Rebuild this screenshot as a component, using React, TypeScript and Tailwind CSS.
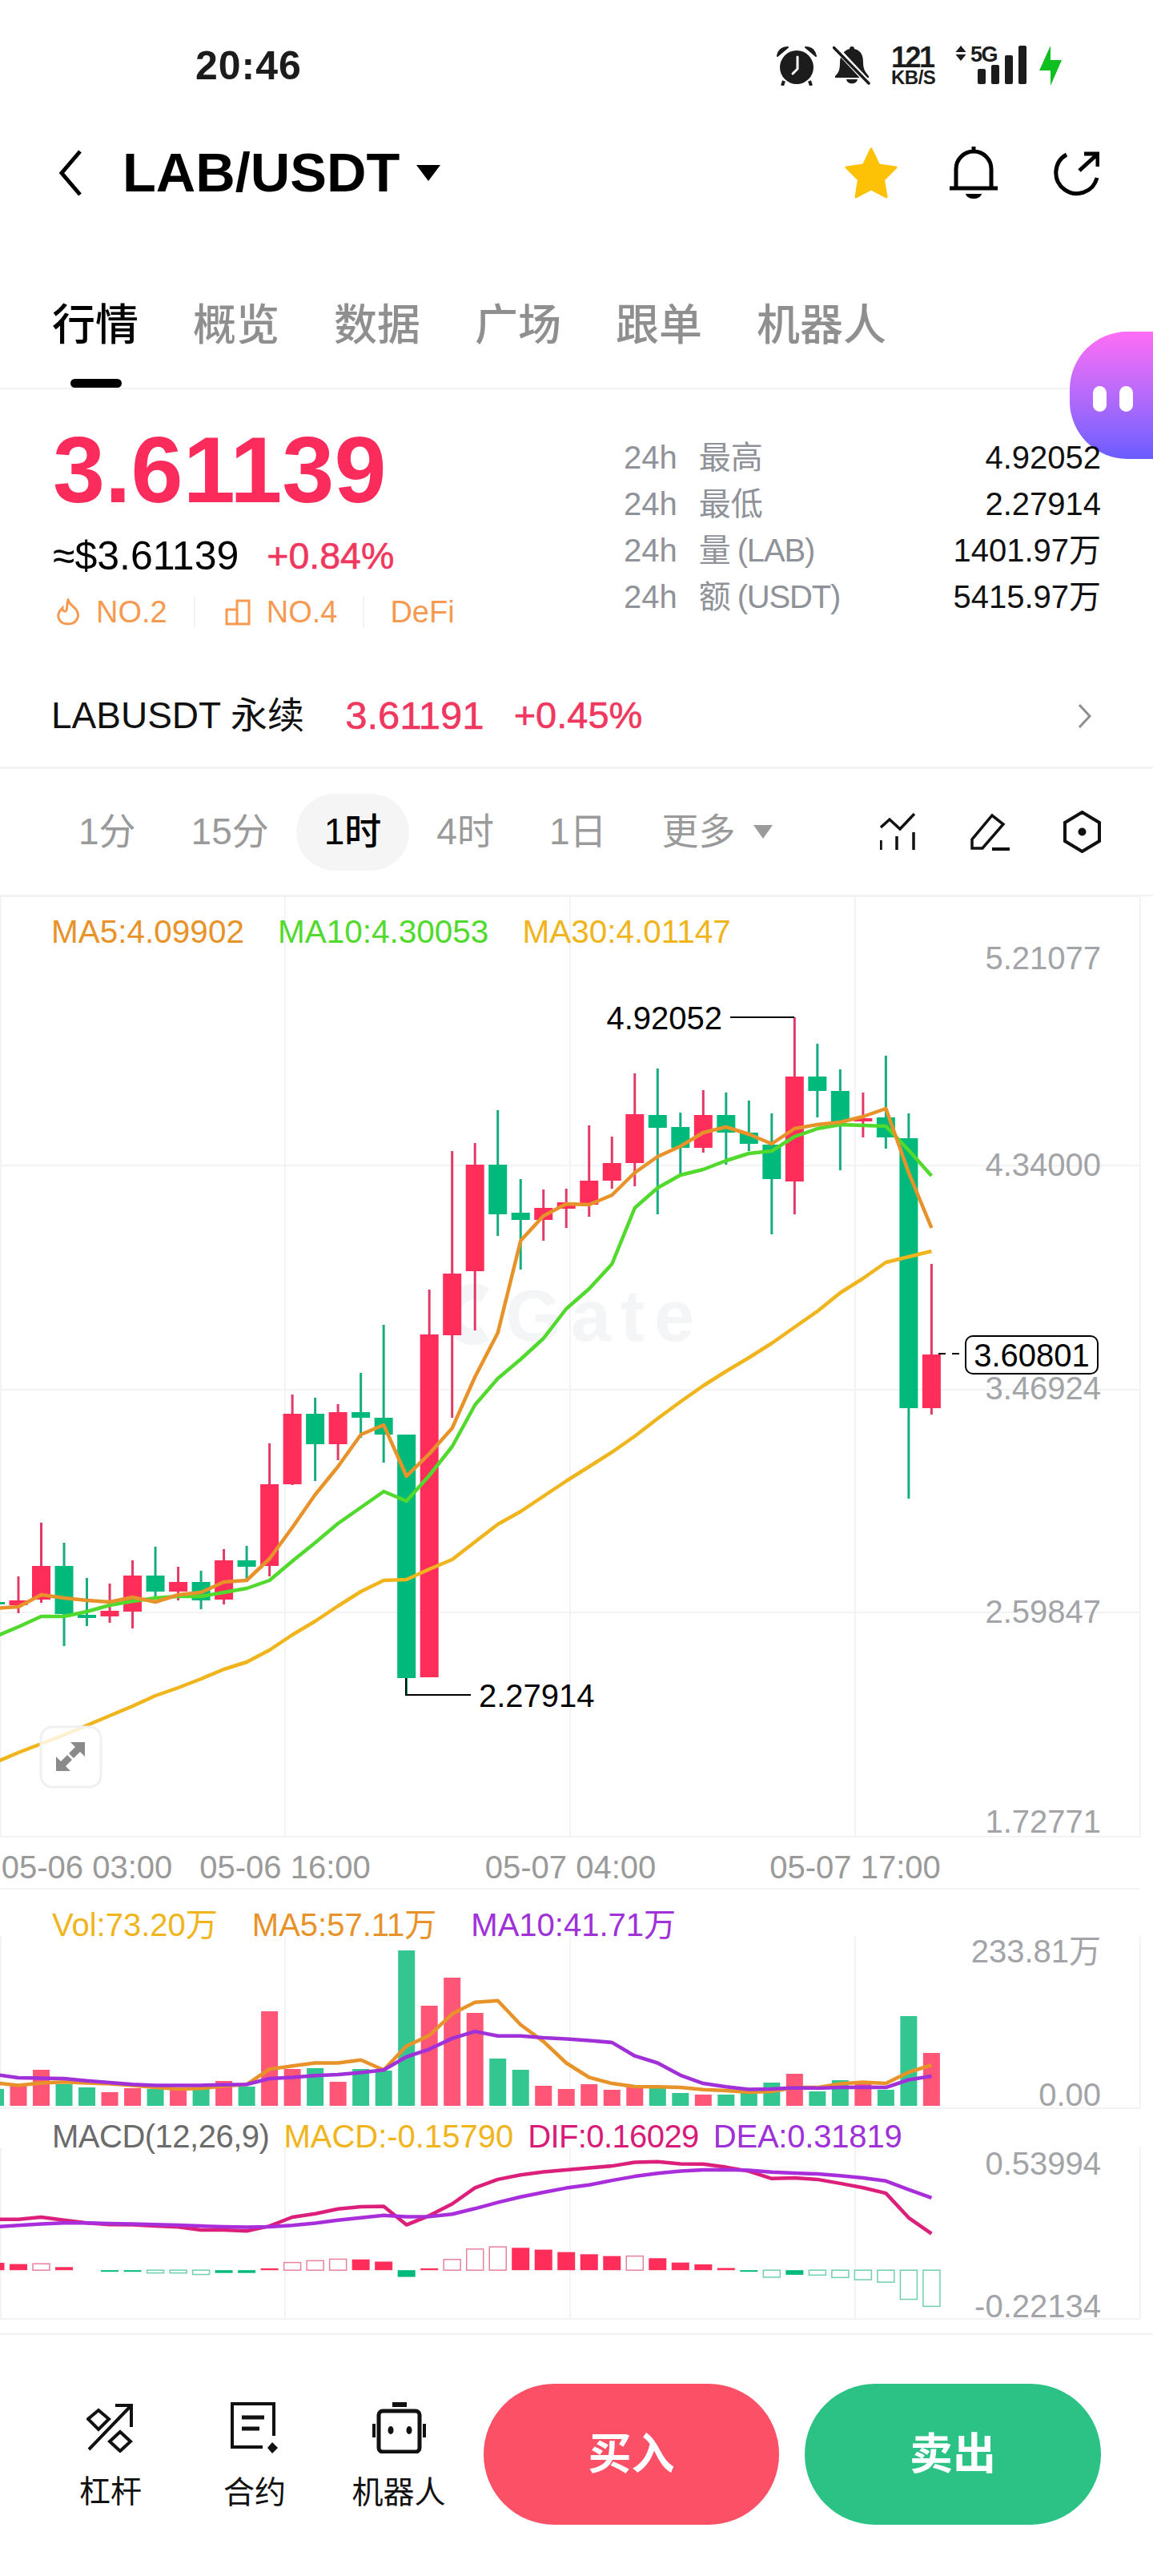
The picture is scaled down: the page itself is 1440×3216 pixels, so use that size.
import React from "react";

const RED = "#ff2d5a";
const GREEN = "#00b97a";
const GRID = "#f3f3f3";

const candleX = (i: number) => 23 + 28.51 * i;

// wick top, body top, body bottom, wick bottom, rising
type Candle = [number, number, number, number, boolean];
const candles: Candle[] = [
  [1967, 1997, 2003, 2013, true],
  [1900, 1954, 1996, 2000, true],
  [1925, 1954, 2014, 2054, false],
  [1969, 2015, 2019, 2029, false],
  [1976, 2010, 2017, 2025, true],
  [1947, 1966, 2011, 2032, true],
  [1930, 1966, 1986, 1993, false],
  [1955, 1974, 1986, 1997, true],
  [1960, 1974, 1997, 2008, false],
  [1933, 1947, 1996, 2002, true],
  [1929, 1947, 1955, 1973, false],
  [1801, 1852, 1954, 1967, true],
  [1740, 1764, 1852, 1853, true],
  [1744, 1764, 1802, 1848, false],
  [1752, 1762, 1802, 1822, true],
  [1713, 1762, 1769, 1794, false],
  [1653, 1769, 1790, 1825, false],
  [1790, 1790, 2094, 2115, false],
  [1609, 1665, 2093, 2093, true],
  [1436, 1589, 1666, 1769, true],
  [1426, 1453, 1586, 1660, true],
  [1385, 1453, 1515, 1542, false],
  [1471, 1513, 1522, 1584, false],
  [1484, 1507, 1522, 1548, true],
  [1483, 1500, 1508, 1532, true],
  [1404, 1473, 1503, 1518, true],
  [1418, 1451, 1473, 1483, true],
  [1339, 1390, 1451, 1480, true],
  [1333, 1391, 1407, 1515, false],
  [1388, 1406, 1432, 1465, false],
  [1360, 1391, 1432, 1438, true],
  [1363, 1391, 1413, 1453, false],
  [1373, 1413, 1427, 1436, false],
  [1389, 1428, 1471, 1540, false],
  [1269, 1343, 1474, 1515, true],
  [1302, 1343, 1361, 1394, false],
  [1334, 1361, 1399, 1460, false],
  [1363, 1395, 1399, 1419, true],
  [1317, 1394, 1419, 1433, false],
  [1389, 1420, 1757, 1870, false],
  [1577, 1690, 1757, 1765, true],
];

// moving averages start one candle left of the visible edge
const ma5 = [2007, 2005, 1990, 1994, 1997, 1999, 1993, 1999, 1990, 1987, 1974, 1972, 1945, 1906, 1865, 1830, 1790, 1778, 1842, 1814, 1782, 1718, 1663, 1548, 1517, 1502, 1503, 1491, 1463, 1443, 1430, 1413, 1406, 1415, 1427, 1408, 1403, 1400, 1393, 1383, 1463, 1532];
const ma10 = [2042, 2030, 2017, 2017, 2011, 2003, 1998, 1994, 1992, 1992, 1987, 1982, 1972, 1948, 1925, 1901, 1881, 1861, 1873, 1841, 1805, 1753, 1720, 1696, 1670, 1633, 1608, 1577, 1507, 1482, 1466, 1459, 1448, 1439, 1436, 1418, 1408, 1403, 1404, 1405, 1435, 1467];
const ma30 = [2199, 2187, 2176, 2165, 2153, 2141, 2129, 2116, 2106, 2095, 2083, 2074, 2059, 2040, 2023, 2004, 1986, 1972, 1971, 1958, 1946, 1924, 1902, 1886, 1867, 1848, 1830, 1812, 1792, 1770, 1749, 1729, 1711, 1694, 1676, 1656, 1636, 1613, 1595, 1575, 1568, 1561];

const volHeights = [21, 25, 45, 27, 23, 17, 22, 21, 21, 21, 31, 24, 118, 46, 47, 30, 46, 44, 194, 125, 160, 116, 59, 45, 25, 21, 27, 20, 24, 22, 16, 14, 14, 16, 29, 40, 18, 32, 27, 20, 112, 66];
const volUp = [false, true, true, false, false, true, true, false, true, false, true, false, true, true, false, true, false, false, false, true, true, true, false, false, true, true, true, true, true, false, false, true, false, false, false, true, false, false, true, false, false, true];

// lower panes were traced at 2.613x, so values go through toY
const toY = (z: number) => 2320 + z / 2.613;
const volMa5 = [730, 738, 730, 727, 730, 733, 738, 745, 750, 748, 740, 735, 685, 675, 665, 665, 655, 688, 610, 575, 505, 467, 462, 540, 595, 665, 712, 732, 742, 743, 745, 752, 755, 760, 758, 745, 745, 733, 728, 732, 695, 672].map(toY);
const volMa10 = [703, 713, 715, 716, 723, 729, 735, 738, 738, 738, 736, 735, 716, 712, 706, 703, 696, 688, 645, 620, 585, 562, 577, 577, 583, 587, 592, 598, 642, 665, 705, 732, 743, 751, 750, 746, 747, 745, 744, 745, 720, 708].map(toY);
const dif = [1175, 1175, 1168, 1178, 1187, 1192, 1193, 1197, 1200, 1210, 1210, 1213, 1197, 1168, 1157, 1141, 1134, 1133, 1193, 1163, 1125, 1072, 1045, 1030, 1020, 1014, 1007, 1001, 989, 987, 994, 995, 1005, 1018, 1042, 1040, 1045, 1058, 1072, 1090, 1170, 1222].map(toY);
const dea = [1200, 1195, 1190, 1187, 1187, 1189, 1190, 1192, 1194, 1197, 1199, 1201, 1199, 1195, 1188, 1178, 1170, 1162, 1167, 1166, 1158, 1140, 1120, 1102, 1087, 1073, 1063, 1048, 1035, 1025, 1018, 1014, 1013, 1015, 1021, 1024, 1027, 1033, 1040, 1050, 1078, 1105].map(toY);

// histogram end, hollow bar
const hist: [number, boolean][] = [
  [1317, false], [1321, false], [1320, true], [1331, false], [1341, false], [1346, false], [1345, false], [1350, true], [1350, true], [1355, true], [1350, false], [1350, false], [1335, false], [1316, true], [1310, true], [1305, true], [1306, false], [1313, false], [1363, false], [1335, false], [1306, true], [1272, true], [1265, true], [1268, false], [1274, false], [1282, false], [1289, false], [1295, false], [1295, true], [1302, false], [1316, false], [1322, false], [1334, false], [1345, false], [1364, true], [1356, false], [1357, true], [1365, true], [1372, true], [1380, true], [1436, true], [1459, true],
];

const pts = (ys: number[]) => ys.map((y, i) => `${candleX(i - 1).toFixed(1)},${y.toFixed(1)}`).join(" ");

function Line({ ys, color, width = 4.5 }: { ys: number[]; color: string; width?: number }) {
  return <polyline points={pts(ys)} fill="none" stroke={color} strokeWidth={width} strokeLinejoin="round" />;
}

function VGrid({ y1, y2 }: { y1: number; y2: number }) {
  return (
    <>
      {[1, 356, 712, 1068, 1424].map((x) => (
        <line key={x} x1={x} x2={x} y1={y1} y2={y2} stroke={GRID} strokeWidth={2} />
      ))}
    </>
  );
}

function AxisLabel({ y, children }: { y: number; children: React.ReactNode }) {
  return (
    <text x={1375} y={y + 14} textAnchor="end" fontSize={40} fill="#a2a4a8">
      {children}
    </text>
  );
}

function MainChart() {
  return (
    <div className="relative h-[1240px]">
      <svg width="1440" height="1240" viewBox="0 1118 1440 1240" className="block">
        <VGrid y1={1118} y2={2292} />
        {[1118, 1454, 1734, 2012, 2292].map((y) => (
          <line key={y} x1={0} x2={1424} y1={y} y2={y} stroke={GRID} strokeWidth={2} />
        ))}
        <path d="M606 1616 A28 28 0 1 0 606 1664" fill="none" stroke="#f4f5f6" strokeWidth={20} />
        <text x={631} y={1673} fontSize={90} fontWeight={700} letterSpacing={12} fill="#f4f5f6">
          Gate
        </text>
        <AxisLabel y={1195}>5.21077</AxisLabel>
        <AxisLabel y={1453}>4.34000</AxisLabel>
        <AxisLabel y={1732}>3.46924</AxisLabel>
        <AxisLabel y={2011}>2.59847</AxisLabel>
        <AxisLabel y={2273}>1.72771</AxisLabel>
        {candles.map(([wt, bt, bb, wb, up], i) => (
          <g key={i}>
            <line x1={candleX(i)} x2={candleX(i)} y1={wt} y2={wb} stroke={up ? "#e23a66" : "#16ab80"} strokeWidth={3} />
            <rect x={candleX(i) - 11.5} y={bt} width={23} height={bb - bt} fill={up ? RED : GREEN} />
          </g>
        ))}
        <rect x={0} y={1999} width={6} height={3} fill={GREEN} />
        <Line ys={ma30} color="#f0b41c" />
        <Line ys={ma10} color="#52d92e" />
        <Line ys={ma5} color="#e8922a" />
        <text x={902} y={1284} textAnchor="end" fontSize={40} fill="#000">
          4.92052
        </text>
        <path d="M912 1269 H992" stroke="#000" strokeWidth={2} fill="none" />
        <path d="M507 2094 V2115 H588" stroke="#000" strokeWidth={2} fill="none" />
        <text x={598} y={2130} fontSize={40} fill="#000">
          2.27914
        </text>
        <path d="M1172 1689 H1205" stroke="#000" strokeWidth={2} strokeDasharray="9 8" />
        <rect x={1206} y={1667} width={165} height={47} rx={9} fill="#fff" stroke="#000" strokeWidth={2} />
        <text x={1288.5} y={1705} textAnchor="middle" fontSize={40} fill="#000">
          3.60801
        </text>
        <rect x={51} y={2155} width={75} height={75} rx={14} fill="#ffffff" fillOpacity={0.8} stroke="#f0f0f0" strokeWidth={3} />
        <path d="M70 2210 V2192 L76 2198 L84 2190 L90 2196 L82 2204 L88 2210 Z M106 2174 V2192 L100 2186 L92 2194 L86 2188 L94 2180 L88 2174 Z" fill="#8a8a8a" />
        {[
          ["05-06 03:00", 108.5],
          ["05-06 16:00", 356],
          ["05-07 04:00", 712.5],
          ["05-07 17:00", 1068],
        ].map(([label, x]) => (
          <text key={label} x={x} y={2344} textAnchor="middle" fontSize={40} fill="#9a9a9a">
            {label}
          </text>
        ))}
        <line x1={0} x2={1424} y1={2358} y2={2358} stroke="#f0f0f0" strokeWidth={3} />
      </svg>
      <div className="absolute left-[64px] top-[21px] flex gap-[42px] text-[40.5px] leading-[46px]">
        <span className="text-[#e8922a]">MA5:4.09902</span>
        <span className="text-[#52d92e]">MA10:4.30053</span>
        <span className="text-[#f0b41c]">MA30:4.01147</span>
      </div>
    </div>
  );
}

function VolumeChart() {
  return (
    <div className="relative h-[280px]">
      <svg width="1440" height="280" viewBox="0 2358 1440 280" className="block">
        <VGrid y1={2416} y2={2631} />
        <line x1={0} x2={1424} y1={2631} y2={2631} stroke={GRID} strokeWidth={2} />
        <AxisLabel y={2435}>233.81万</AxisLabel>
        <AxisLabel y={2614}>0.00</AxisLabel>
        {volHeights.map((h, i) => (
          <rect key={i} x={candleX(i - 1) - 10.5} y={2628 - h} width={21} height={h} fill={volUp[i] ? "#ff5577" : "#34c691"} />
        ))}
        <Line ys={volMa5} color="#e8922a" />
        <Line ys={volMa10} color="#a030d8" />
      </svg>
      <div className="absolute left-[65px] top-[21px] flex gap-[43px] text-[40px] leading-[46px]">
        <span className="text-[#f0b41c]">Vol:73.20万</span>
        <span className="text-[#e8922a]">MA5:57.11万</span>
        <span className="text-[#a030d8]">MA10:41.71万</span>
      </div>
    </div>
  );
}

function MacdChart() {
  const zero = toY(1341);
  return (
    <div className="relative h-[276px]">
      <svg width="1440" height="276" viewBox="0 2638 1440 276" className="block">
        <VGrid y1={2680} y2={2894} />
        <line x1={0} x2={1424} y1={2894} y2={2894} stroke={GRID} strokeWidth={2} />
        <line x1={0} x2={1440} y1={2913} y2={2913} stroke="#f3f3f3" strokeWidth={3} />
        <AxisLabel y={2700}>0.53994</AxisLabel>
        <AxisLabel y={2878}>-0.22134</AxisLabel>
        {hist.map(([end, hollow], i) => {
          const y = toY(end);
          const top = Math.min(y, zero);
          const h = Math.abs(y - zero);
          if (h < 1) return null;
          const color = y < zero ? RED : GREEN;
          return hollow ? (
            <rect key={i} x={candleX(i - 1) - 10.5} y={top} width={21} height={h} fill="#fff" stroke={y < zero ? "#e8829c" : "#6fcfb0"} strokeWidth={1.5} />
          ) : (
            <rect key={i} x={candleX(i - 1) - 11} y={top} width={22} height={Math.max(h, 2)} fill={color} />
          );
        })}
        <Line ys={dif} color="#dc1f7a" />
        <Line ys={dea} color="#a92edb" />
      </svg>
      <div className="absolute left-[65px] top-[5px] flex gap-[18px] text-[40px] leading-[46px]">
        <span className="tracking-[-0.5px] text-[#6b6b6b]">MACD(12,26,9)</span>
        <span className="text-[#f0b41c]">MACD:-0.15790</span>
        <span className="tracking-[-0.6px] text-[#d81b78]">DIF:0.16029</span>
        <span className="tracking-[-0.2px] text-[#a030d8]">DEA:0.31819</span>
      </div>
    </div>
  );
}

function StatusBar() {
  return (
    <div className="flex h-[164px] items-center pl-[244px] text-[#1c1c1c]">
      <span className="w-[134px] shrink-0 text-[50px] font-bold leading-none tracking-[1px]">20:46</span>
      <svg width="50" height="50" viewBox="0 0 50 50" className="ml-[592px] shrink-0">
        <circle cx="25" cy="27" r="21" fill="#1c1c1c" />
        <path d="M1 13 C2 6 7 2 14 2 Z M49 13 C48 6 43 2 36 2 Z" fill="#1c1c1c" stroke="#1c1c1c" strokeWidth="2" strokeLinejoin="round" />
        <path d="M9 44 L7 50 M41 44 L43 50" stroke="#1c1c1c" strokeWidth="4" />
        <path d="M26 14 V29 L20 35" stroke="#fff" strokeWidth="3" fill="none" strokeLinecap="round" />
      </svg>
      <svg width="48" height="48" viewBox="0 0 48 48" className="ml-[20px] shrink-0">
        <path d="M24 0 a3 3 0 0 1 3 3 C36 5 38 12 38 20 C38 30 42 33 45 37 V39 H3 V37 C7 33 9 30 9 20 C9 12 13 5 21 3 a3 3 0 0 1 3 -3 Z M17 41 H31 C30 48 18 48 17 41 Z" fill="#1c1c1c" />
        <path d="M2 0 L46 47" stroke="#fff" strokeWidth="7" />
        <path d="M1 1 L45 46" stroke="#1c1c1c" strokeWidth="3.5" strokeLinecap="round" />
      </svg>
      <div className="ml-[25px] flex w-[60px] shrink-0 flex-col font-bold">
        <span className="text-[36px] leading-[30px] tracking-[-2.5px]">121</span>
        <span className="text-[24px] leading-[20px] tracking-[-0.5px]">KB/S</span>
      </div>
      <svg width="90" height="56" viewBox="0 -6 90 56" className="-mt-[6px] ml-[20px] shrink-0">
        <path d="M0.5 8 L7 0 L13.5 8 Z M0.5 11 H13.5 L7 19 Z" fill="#1c1c1c" />
        <text x="19" y="20" fontSize="27" fontWeight="700" letterSpacing="-1.5" fill="#1c1c1c">
          5G
        </text>
        <rect x="28" y="29" width="10" height="19" rx="2" fill="#1c1c1c" />
        <rect x="45" y="24" width="10" height="24" rx="2" fill="#1c1c1c" />
        <rect x="62" y="12" width="10" height="36" rx="2" fill="#1c1c1c" />
        <rect x="79" y="0" width="10" height="48" rx="2" fill="#1c1c1c" />
      </svg>
      <svg width="28" height="50" viewBox="0 0 28 50" className="ml-[15px] shrink-0">
        <polygon points="14,0 0,31 14,31 14,50 28,18 14,18" fill="#0fbf1f" />
      </svg>
    </div>
  );
}

function NavBar() {
  return (
    <div className="flex h-[104px] items-center pl-[72px] pr-[67px]">
      <svg width="31" height="60" viewBox="0 0 31 60">
        <path d="M28 3 L5 30 L28 57" fill="none" stroke="#000" strokeWidth="5" />
      </svg>
      <span className="ml-[50px] text-[68.5px] font-bold leading-none text-black">LAB/USDT</span>
      <svg width="30" height="20" viewBox="0 0 30 20" className="ml-[21px]">
        <polygon points="0,0 30,0 15,20" fill="#000" />
      </svg>
      <svg width="68" height="64" viewBox="0 0 68 64" className="ml-auto">
        <path d="M34 2 L43.5 22 L65 25 L49.5 40.5 L53 62 L34 52 L15 62 L18.5 40.5 L3 25 L24.5 22 Z" fill="#fdc106" stroke="#fdc106" strokeWidth="3" strokeLinejoin="round" />
      </svg>
      <svg width="60" height="66" viewBox="0 0 60 66" className="ml-[64px]">
        <path d="M30 0 V6 M8 50 V28 A22 22 0 0 1 52 28 V50" fill="none" stroke="#000" strokeWidth="5" />
        <path d="M0 52 H60" stroke="#000" strokeWidth="5" />
        <path d="M20 59 H40 C38 67 22 67 20 59 Z" fill="#000" />
      </svg>
      <svg width="58" height="58" viewBox="0 0 58 58" className="ml-[69px] mt-[4px]">
        <path d="M17 4 A26 26 0 1 0 55 33" fill="none" stroke="#000" strokeWidth="5" />
        <path d="M33 24 L55 4 M39 3 H56 V19" fill="none" stroke="#000" strokeWidth="5" />
      </svg>
    </div>
  );
}

function Tabs() {
  const tabs = ["行情", "概览", "数据", "广场", "跟单", "机器人"];
  return (
    <div className="relative flex h-[218px] gap-[68px] border-b-2 border-[#f2f2f2] pl-[65px] pt-[106px]">
      {tabs.map((t, i) => (
        <span key={t} className={`text-[54px] font-medium leading-[64px] ${i === 0 ? "text-black" : "text-[#8f8f8f]"}`}>
          {t}
        </span>
      ))}
      <div className="absolute bottom-0 left-[88px] h-[11px] w-[64px] rounded-full bg-black" />
    </div>
  );
}

function Stats() {
  const rows = [
    ["最高", "", "4.92052"],
    ["最低", "", "2.27914"],
    ["量", "(LAB)", "1401.97万"],
    ["额", "(USDT)", "5415.97万"],
  ];
  return (
    <div className="relative z-10 flex h-[344px]">
      <div className="w-[779px] pl-[66px] pt-[44px]">
        <div className="text-[117px] font-bold leading-[113px] text-[#fb2c5c]">3.61139</div>
        <div className="mt-[23px] flex items-center text-[46.5px] leading-[56px]">
          <span className="text-[50px] text-black">≈$3.61139</span>
          <span className="ml-[35px] text-[#f0385f] [-webkit-text-stroke:0.6px]">+0.84%</span>
        </div>
        <div className="mt-[20px] flex items-center text-[38px] leading-[44px] text-[#f59a50]">
          <svg width="32" height="34" viewBox="0 0 32 34" className="ml-[3px]">
            <path d="M16 2 C18 8 22 9 26 14 C31 21 28 32 16 32 C5 32 2 23 5 17 C6 15 8 13 9 12 C9 15 11 17 13 16 C16 13 14 7 16 2 Z" fill="none" stroke="#f59a50" strokeWidth="3" />
          </svg>
          <span className="ml-[19px]">NO.2</span>
          <div className="ml-[33px] h-[40px] w-[2px] bg-[#f3f3f3]" />
          <svg width="32" height="34" viewBox="0 0 32 34" className="ml-[37px]">
            <path d="M2 14 H15 V32 H2 Z M15 32 H30 V3 H15 V14" fill="none" stroke="#f59a50" strokeWidth="3" />
          </svg>
          <span className="ml-[20px]">NO.4</span>
          <div className="ml-[32px] h-[40px] w-[2px] bg-[#f3f3f3]" />
          <span className="ml-[32px]">DeFi</span>
        </div>
      </div>
      <div className="w-[596px] pt-[56px]">
        {rows.map(([label, unit, value]) => (
          <div key={label} className="flex h-[58px] items-center justify-between text-[40px]">
            <span className="text-[#8f9298]">
              24h<span className="ml-[27px]">{label}</span>
              {unit && <span className="ml-[8px] tracking-[-1.2px]">{unit}</span>}
            </span>
            <span className="text-[#111]">{value}</span>
          </div>
        ))}
      </div>
    </div>
  );
}

function PerpRow() {
  return (
    <div className="flex h-[130px] items-center border-b-[3px] border-[#f2f2f2] pl-[64px] pr-[76px] text-[46px]">
      <span className="text-[#111]">LABUSDT 永续</span>
      <span className="ml-[51px] text-[49px] text-[#f0385f] [-webkit-text-stroke:0.6px]">3.61191</span>
      <span className="ml-[37px] text-[47px] text-[#f0385f] [-webkit-text-stroke:0.6px]">+0.45%</span>
      <svg width="18" height="30" viewBox="0 0 18 30" className="ml-auto">
        <path d="M2 1 L15 15 L2 29" fill="none" stroke="#8f8f8f" strokeWidth="3" />
      </svg>
    </div>
  );
}

function PeriodBar() {
  return (
    <div className="flex h-[159px] items-center gap-[69px] border-b-2 border-[#f2f2f2] pl-[98px] text-[46px] text-[#9a9a9a]">
      <span>1分</span>
      <span>15分</span>
      <span className="-mx-[35px] flex h-[96px] items-center rounded-full bg-[#f5f5f5] px-[35px] font-medium text-black">1时</span>
      <span>4时</span>
      <span>1日</span>
      <span className="flex items-center">
        更多
        <svg width="24" height="17" viewBox="0 0 24 17" className="ml-[22px]">
          <polygon points="0,0 24,0 12,17" fill="#9a9a9a" />
        </svg>
      </span>
      <svg width="44" height="47" viewBox="0 0 44 47" className="ml-[65px]">
        <path d="M1 18 L12 8 L25 20 L43 1 M1 34 V46 M21 29 V46 M42 24 V46" fill="none" stroke="#111" strokeWidth="3.5" />
      </svg>
      <svg width="51" height="48" viewBox="0 0 51 48" className="-ml-[1px]">
        <path d="M3 44 V33 L28 3 L42 14 L16 44 Z" fill="none" stroke="#111" strokeWidth="3.5" />
        <path d="M28 45 H50" stroke="#111" strokeWidth="4" />
      </svg>
      <svg width="47" height="53" viewBox="0 0 47 53" className="-ml-[3px]">
        <polygon points="23.5,2 45,15 45,38 23.5,51 2,38 2,15" fill="none" stroke="#111" strokeWidth="4" />
        <circle cx="23.5" cy="26.5" r="5" fill="#111" />
      </svg>
    </div>
  );
}

function BottomBar() {
  const items = [
    {
      label: "杠杆",
      icon: (
        <svg width="60" height="62" viewBox="0 0 60 62">
          <polygon points="15,9 28,20 15,33 2,20" fill="none" stroke="#111" strokeWidth="4" />
          <polygon points="42,36 55,48 42,60 29,48" fill="none" stroke="#111" strokeWidth="4" />
          <path d="M3 58 L55 4 M36 3 H56 V30" fill="none" stroke="#111" strokeWidth="4" />
        </svg>
      ),
    },
    {
      label: "合约",
      icon: (
        <svg width="60" height="64" viewBox="0 0 60 64">
          <path d="M54 42 V2 H2 V56 H40" fill="none" stroke="#111" strokeWidth="4" />
          <path d="M14 19 H42 M14 33 H36" stroke="#111" strokeWidth="5" />
          <polygon points="52,50 59,57 52,64 46,57" fill="#111" />
        </svg>
      ),
    },
    {
      label: "机器人",
      icon: (
        <svg width="67" height="64" viewBox="0 0 67 64">
          <rect x="25" y="0" width="18" height="6" fill="#111" />
          <rect x="8" y="11" width="51" height="51" rx="5" fill="none" stroke="#111" strokeWidth="5" />
          <path d="M2 27 V44 M65 27 V44" stroke="#111" strokeWidth="4" />
          <ellipse cx="23" cy="35" rx="3.5" ry="5" fill="#111" />
          <ellipse cx="46" cy="35" rx="3.5" ry="5" fill="#111" />
        </svg>
      ),
    },
  ];
  return (
    <div className="flex h-[301px] items-center pb-[3px] pl-[48px]">
      {items.map((it) => (
        <div key={it.label} className="mt-[6px] flex w-[180px] flex-col items-center gap-[25px]">
          {it.icon}
          <span className="text-[39px] leading-[48px] text-[#111]">{it.label}</span>
        </div>
      ))}
      <button className="ml-[16px] h-[176px] w-[369px] rounded-full bg-[#fb5065] text-[54px] font-bold text-white">买入</button>
      <button className="ml-[32px] h-[176px] w-[370px] rounded-full bg-[#2cc285] text-[54px] font-bold text-white">卖出</button>
    </div>
  );
}

export default function App() {
  return (
    <div className="relative h-[3216px] w-[1440px] overflow-hidden bg-white font-['Liberation_Sans','Noto_Sans_CJK_SC',sans-serif]">
      <StatusBar />
      <NavBar />
      <Tabs />
      <Stats />
      <PerpRow />
      <PeriodBar />
      <MainChart />
      <VolumeChart />
      <MacdChart />
      <BottomBar />
      <div className="absolute right-0 top-[414px] flex h-[159px] w-[104px] items-center gap-[16px] rounded-l-[72px] bg-linear-to-b from-[#ff6cf5] to-[#6a5cff] pl-[29px] pt-[8px]">
        <div className="h-[32px] w-[17px] rounded-full bg-white" />
        <div className="h-[32px] w-[17px] rounded-full bg-white" />
      </div>
    </div>
  );
}
